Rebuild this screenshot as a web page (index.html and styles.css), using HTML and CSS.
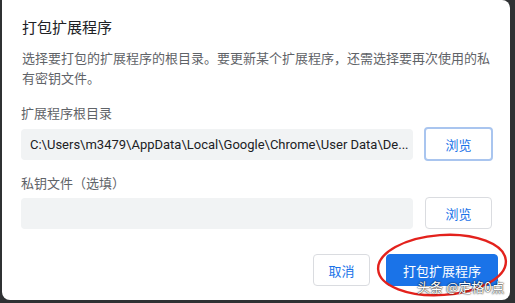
FILE: index.html
```html
<!DOCTYPE html>
<html lang="zh-CN">
<head>
<meta charset="utf-8">
<link rel="stylesheet" href="styles.css">
</head>
<body>
<div class="dialog">
  <div class="title">打包扩展程序</div>
  <div class="desc">选择要打包的扩展程序的根目录。要更新某个扩展程序，还需选择要再次使用的私有密钥文件。</div>
  <div class="label first">扩展程序根目录</div>
  <div class="row">
    <div class="field"><span class="path">C:\Users\m3479\AppData\Local\Google\Chrome\User Data\De...</span></div>
    <button class="btn browse focused">浏览</button>
  </div>
  <div class="label second">私钥文件（选填）</div>
  <div class="row">
    <div class="field"></div>
    <button class="btn browse">浏览</button>
  </div>
  <div class="footer">
    <button class="btn cancel">取消</button>
    <button class="btn action">打包扩展程序</button>
  </div>
  <svg class="circle" width="140" height="70" viewBox="0 0 140 70">
    <ellipse cx="70" cy="35" rx="64" ry="30" fill="none" stroke="#e3211c" stroke-width="2.4" transform="rotate(-4 70 35)"/>
  </svg>
  <div class="mark">头条 @定格0点</div>
</div>
</body>
</html>
```

FILE: styles.css
```css
html, body {
  margin: 0;
  padding: 0;
}
body {
  width: 515px;
  height: 303px;
  overflow: hidden;
  background: #2f3133;
  font-family: "Noto Sans CJK SC", "Microsoft YaHei", sans-serif;
}
.dialog {
  position: relative;
  margin-left: 2px;
  width: 508px;
  height: 300px;
  box-sizing: border-box;
  background: #fff;
  border-radius: 0 8px 8px 8px;
  padding: 16px 16px 0 19px;
  display: flex;
  flex-direction: column;
}
.title {
  font-size: 15px;
  line-height: 22px;
  color: #202124;
  padding-left: 1px;
}
.desc {
  margin-top: 10px;
  font-size: 13px;
  line-height: 20px;
  color: #5f6368;
  padding-left: 1px;
  width: 472px;
}
.label {
  font-size: 13px;
  line-height: 18px;
  color: #5f6368;
}
.label.first { margin-top: 16px; }
.label.second { margin-top: 13px; }
.row {
  margin-top: 5px;
  display: flex;
  align-items: center;
  gap: 12px;
}
.field {
  width: 392px;
  height: 31px;
  background: #f1f3f4;
  border-radius: 4px;
  display: flex;
  align-items: center;
  padding-left: 9px;
  box-sizing: border-box;
}
.path {
  font-family: Roboto, "Noto Sans CJK SC", sans-serif;
  font-size: 13px;
  color: #202124;
  white-space: nowrap;
}
.btn {
  font-family: "Noto Sans CJK SC", "Microsoft YaHei", sans-serif;
  font-size: 13px;
  height: 32px;
  border-radius: 4px;
  border: 1px solid #dadce0;
  background: #fff;
  color: #1a73e8;
  padding: 0;
  box-sizing: border-box;
}
.browse {
  width: 67px;
}
.browse.focused {
  border: 2px solid #a9c5ef;
  height: 34px;
  width: 69px;
  margin-left: -1px;
}
.footer {
  margin-top: 25px;
  display: flex;
  justify-content: flex-end;
  gap: 16px;
  margin-right: -4px;
}
.cancel {
  width: 57px;
}
.action {
  width: 112px;
  background: #1a73e8;
  border-color: #1a73e8;
  color: #fff;
}
.circle {
  position: absolute;
  left: 370px;
  top: 230px;
}
.mark {
  position: absolute;
  left: 415px;
  top: 279px;
  font-size: 13px;
  line-height: 16px;
  color: #fff;
  white-space: nowrap;
  text-shadow: 0 0 2px rgba(0,0,0,0.85), 0 0 1px rgba(0,0,0,0.85);
}
```
